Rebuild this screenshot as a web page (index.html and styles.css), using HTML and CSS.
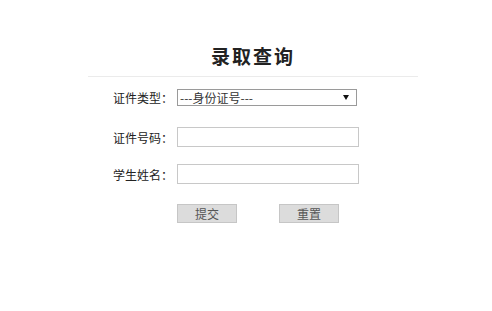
FILE: index.html
```html
<!DOCTYPE html>
<html lang="zh-CN">
<head>
<meta charset="utf-8">
<title>录取查询</title>
<link rel="stylesheet" href="styles.css">
</head>
<body>
<div class="wrap">
  <h1 class="title">录取查询</h1>
  <form class="form">
    <div class="row row-type">
      <label class="label">证件类型：</label>
      <div class="select-box">
        <select class="select">
          <option>---身份证号---</option>
        </select>
        <svg class="arrow" width="6" height="5" viewBox="0 0 6 5"><path d="M0 0H6L3 5Z" fill="#111"/></svg>
      </div>
    </div>
    <div class="row row-id">
      <label class="label">证件号码：</label>
      <input class="input" type="text">
    </div>
    <div class="row row-name">
      <label class="label">学生姓名：</label>
      <input class="input" type="text">
    </div>
    <div class="row row-btns">
      <span class="label"></span>
      <button class="btn" type="button">提交</button>
      <button class="btn btn-reset" type="button">重置</button>
    </div>
  </form>
</div>
</body>
</html>
```
FILE: styles.css
```css
html, body {
  margin: 0;
  padding: 0;
  background: #fff;
}
body {
  font-family: "Noto Sans CJK SC", "Noto Sans", sans-serif;
  font-size: 12px;
  color: #222;
}
.wrap {
  width: 330px;
  margin-left: 88px;
}
.title {
  margin: 0;
  padding-top: 46px;
  padding-bottom: 10px;
  height: 20px;
  line-height: 20px;
  font-size: 19px;
  font-weight: bold;
  letter-spacing: 2px;
  text-align: center;
  color: #222;
  border-bottom: 1px solid #ebebeb;
}
.form {
  margin: 0;
}
.row {
  display: flex;
  align-items: center;
}
.row-type { margin-top: 12px; height: 17px; }
.row-id { margin-top: 21px; height: 20px; }
.row-name { margin-top: 17px; height: 20px; }
.row-btns { margin-top: 20px; height: 19px; }
.label {
  width: 85px;
  margin-right: 4px;
  text-align: right;
  line-height: 17px;
  color: #222;
  flex: none;
}
.select-box {
  position: relative;
  width: 180px;
  height: 17px;
}
.select {
  appearance: none;
  -webkit-appearance: none;
  box-sizing: border-box;
  width: 180px;
  height: 17px;
  margin: 0;
  padding: 0 0 0 2px;
  border: 1px solid #9a9a9a;
  border-radius: 0;
  background: #fff;
  font-family: "Noto Sans CJK SC", "Noto Sans", sans-serif;
  font-size: 12px;
  line-height: 15px;
  color: #333;
}
.arrow {
  position: absolute;
  left: 166px;
  top: 6px;
  pointer-events: none;
}
.input {
  box-sizing: border-box;
  width: 182px;
  height: 20px;
  margin: 0;
  padding: 0 2px;
  border: 1px solid #c8c8c8;
  border-radius: 0;
  background: #fff;
  outline: none;
}
.btn {
  box-sizing: border-box;
  width: 60px;
  height: 19px;
  margin: 0;
  padding: 0;
  border: 1px solid #c6c6c6;
  border-radius: 0;
  background: #dcdcdc;
  font-family: "Noto Sans CJK SC", "Noto Sans", sans-serif;
  font-size: 12px;
  line-height: 17px;
  color: #555;
}
.btn-reset {
  margin-left: 42px;
}
```
